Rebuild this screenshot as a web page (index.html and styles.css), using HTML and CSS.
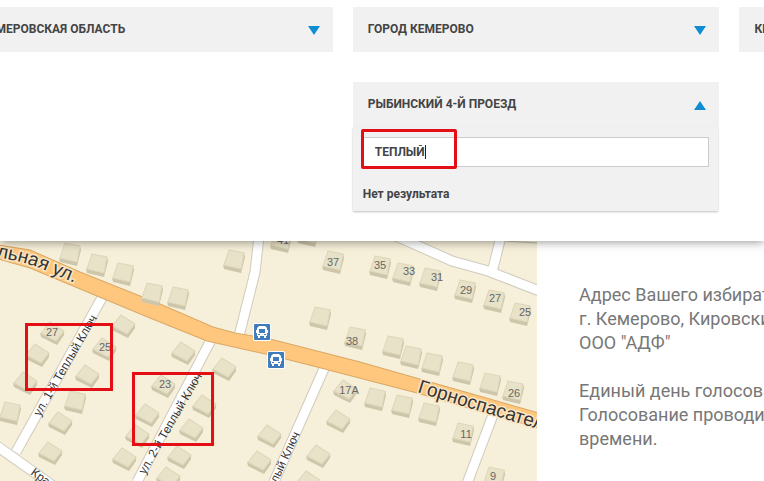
FILE: index.html
```html
<!DOCTYPE html>
<html lang="ru">
<head>
    <meta charset="UTF-8">
    <meta name="viewport" content="width=device-width, initial-scale=1.0">
    <title>Поиск избирательного участка</title>
    <link rel="stylesheet" href="styles.css">
</head>
<body>
    <form class="filters">
        <div class="dropdown">
            <select class="field" aria-label="Регион">
                <option>КЕМЕРОВСКАЯ ОБЛАСТЬ</option>
            </select>
        </div>
        <div class="dropdown">
            <select class="field" aria-label="Город">
                <option>ГОРОД КЕМЕРОВО</option>
            </select>
        </div>
        <div class="dropdown">
            <select class="field" aria-label="Район">
                <option>КИРОВСКИЙ РАЙОН</option>
            </select>
        </div>
        <div class="dropdown street open">
            <button class="field" type="button" aria-expanded="true" aria-controls="streetList">РЫБИНСКИЙ 4-Й ПРОЕЗД</button>
            <div class="panel" id="streetList">
                <div class="search">
                    <input class="searchInput" type="text" value="ТЕПЛЫЙ" aria-label="Поиск улицы">
                    <span class="caret"></span>
                    <span class="mark"></span>
                </div>
                <div class="empty">Нет результата</div>
            </div>
        </div>
    </form>

    <main class="content">
        <svg class="map" viewBox="0 241 537 240" preserveAspectRatio="xMinYMin slice" role="img" aria-label="Карта">
            <defs>
                <g id="h">
                    <path fill="#cdc6aa" d="M-11 4 7 8 10 -8 11 -4 7 12 -10 8z"/>
                    <path fill="#e8e2c8" stroke="#ddd6ba" d="M-5 -11 10 -8 7 8 -10 4z"/>
                </g>
                <g id="d">
                    <path fill="#cdc6aa" d="M-12 0 4 8 12 -2 12 2 5 12 -11 4z"/>
                    <path fill="#e8e2c8" stroke="#ddd6ba" d="M-2 -11 12 -2 4 8 -11 0z"/>
                </g>
                <g id="bus">
                    <rect width="18" height="18" rx="2" fill="#fff"/>
                    <rect x="1" y="1" width="16" height="16" rx="1" fill="#407cbb"/>
                    <path fill="#fff" fill-rule="evenodd" d="M6 3h6l2 2v2h1v3h-1v3h-1v2h-2v-2h-4v2h-2v-2h-1v-3h-1v-3h1v-2zM6 6v4h6v-4zM5 11v1h2v-1zM11 11v1h2v-1z"/>
                </g>
                <path id="mainLeft" d="M-4 257Q26 262 44 270T100 293"/>
            </defs>

            <rect y="241" width="537" height="240" fill="#f6efd9"/>
            <path d="M505 241 537 243" stroke="#c4bfb0"/>

            <!-- дворовые дороги -->
            <g class="roadEdge">
                <path d="M104 294 16 452"/>
                <path d="M-10 441 66 495"/>
                <path d="M213 336 137 482"/>
                <path d="M259 236 255 272 239 336"/>
                <path d="M326 364 273 484"/>
                <path d="M396 236 452 261 488 271 542 292"/>
                <path d="M501 236 492 272"/>
                <path d="M494 412 466 486"/>
            </g>
            <g class="road">
                <path d="M104 294 16 452"/>
                <path d="M-10 441 66 495"/>
                <path d="M213 336 137 482"/>
                <path d="M259 236 255 272 239 336"/>
                <path d="M326 364 273 484"/>
                <path d="M396 236 452 261 488 271 542 292"/>
                <path d="M501 236 492 272"/>
                <path d="M494 412 466 486"/>
            </g>
            <path class="mainRoad" d="M-2 245 30 250 80 272 160 304 213 327 235 333 270 339 360 362 423 380 539 413V428L493 415 417 393 317 367 270 355 207 341 150 318 97 296 30 268 -2 259z"/>

            <!-- дома -->
            <g>
                <use href="#h" x="70" y="254"/><use href="#h" x="97" y="265"/><use href="#h" x="123" y="274"/>
                <use href="#h" x="152" y="294"/><use href="#h" x="178" y="298"/><use href="#h" x="234" y="261"/>
                <use href="#h" x="281" y="241"/><use href="#h" x="308" y="235"/><use href="#h" x="333" y="262"/>
                <use href="#h" x="320" y="318"/><use href="#h" x="355" y="338"/><use href="#h" x="380" y="267"/>
                <use href="#h" x="403" y="274"/><use href="#h" x="430" y="279"/><use href="#h" x="465" y="291"/>
                <use href="#h" x="494" y="301"/><use href="#h" x="520" y="314"/><use href="#h" x="393" y="347"/>
                <use href="#h" x="411" y="357"/><use href="#h" x="432" y="364"/><use href="#h" x="463" y="373"/>
                <use href="#h" x="490" y="384"/><use href="#h" x="513" y="392"/><use href="#h" x="375" y="399"/>
                <use href="#h" x="402" y="406"/><use href="#h" x="429" y="414"/><use href="#h" x="463" y="434"/>
                <use href="#h" x="494" y="478"/><use href="#h" x="75" y="402"/><use href="#h" x="10" y="413"/>
                <use href="#d" x="123" y="326"/><use href="#d" x="52" y="333"/><use href="#d" x="104" y="349"/>
                <use href="#d" x="183" y="353"/><use href="#d" x="37" y="355"/><use href="#d" x="25" y="383"/>
                <use href="#d" x="87" y="376"/><use href="#d" x="60" y="423"/><use href="#d" x="50" y="453"/>
                <use href="#d" x="163" y="386"/><use href="#d" x="147" y="415"/><use href="#d" x="137" y="436"/>
                <use href="#d" x="124" y="459"/><use href="#d" x="179" y="457"/><use href="#d" x="168" y="478"/>
                <use href="#d" x="191" y="430"/><use href="#d" x="224" y="369"/><use href="#d" x="204" y="406"/>
                <use href="#d" x="269" y="436"/><use href="#d" x="259" y="462"/><use href="#d" x="345" y="391"/>
                <use href="#d" x="338" y="421"/><use href="#d" x="318" y="456"/><use href="#d" x="308" y="482"/>
            </g>

            <g class="number">
                <text x="52" y="336">27</text>
                <text x="105" y="351">25</text>
                <text x="165" y="388">23</text>
                <text x="283" y="244">41</text>
                <text x="333" y="266">37</text>
                <text x="380" y="269">35</text>
                <text x="409" y="275">33</text>
                <text x="437" y="281">31</text>
                <text x="466" y="294">29</text>
                <text x="495" y="302">27</text>
                <text x="525" y="316">25</text>
                <text x="352" y="345">38</text>
                <text x="349" y="394">17А</text>
                <text x="514" y="397">26</text>
                <text x="466" y="438">11</text>
                <text x="493" y="480">9</text>
            </g>

            <g class="streetName">
                <text transform="translate(40 417) rotate(-60)">ул. 1-й Теплый Ключ</text>
                <text transform="translate(145 475) rotate(-60)">ул. 2-й Теплый Ключ</text>
                <text transform="translate(300 434) rotate(-65)" text-anchor="end">ул. 3-й Теплый Ключ</text>
                <text transform="translate(30 474) rotate(36)">Красная ул.</text>
            </g>
            <g class="mainName">
                <text><textPath href="#mainLeft">льная ул.</textPath></text>
                <text transform="translate(417 392) rotate(17)">Горноспасательная ул.</text>
            </g>

            <use href="#bus" x="253" y="323"/>
            <use href="#bus" x="267" y="351"/>

            <path class="frame" d="M25 323h88v68h-88zM28 326v62h82v-62z"/>
            <path class="frame" d="M132 372h82v74h-82zM135 375v68h76v-68z"/>
        </svg>

        <div class="info">
            <p>Адрес Вашего избирательного участка:<br>
            г. Кемерово, Кировский район<br>
            ООО "АДФ"</p>
            <p>Единый день голосования<br>
            Голосование проводится по местному<br>
            времени.</p>
        </div>
    </main>
</body>
</html>
```
FILE: styles.css
```css
* {
    box-sizing: border-box;
}
body {
    margin: 0;
    min-height: 100vh;
    display: flex;
    flex-direction: column;
    overflow: hidden;
    background-color: #fff;
    font-family: Roboto, "Liberation Sans", sans-serif;
}

/* фильтры */
.filters {
    display: grid;
    grid-template-columns: calc(48% - 34px) 48% 48%;
    gap: 30px 20px;
    padding: 7px 0 30px;
    position: relative;
    z-index: 1;
    background-color: #fff;
    box-shadow: 0 0 10px rgba(0, 0, 0, 0.5);
}
.dropdown {
    position: relative;
    display: flex;
    flex-direction: column;
}
.dropdown:first-child {
    margin-left: -34px;
}
.street {
    grid-column: 2;
}
.field {
    appearance: none;
    width: 100%;
    height: 45px;
    margin: 0;
    padding: 0 15px 1px;
    border: 0;
    border-radius: 0;
    background-color: #f1f1f1;
    color: #444;
    font: bold 12px Roboto, "Liberation Sans", sans-serif;
    text-align: left;
}
.dropdown::after {
    content: "";
    position: absolute;
    right: 13px;
    top: 19px;
    border: 6px solid transparent;
    border-top: 9px solid #0f8dd3;
    border-bottom: 0;
    pointer-events: none;
}
.open::after {
    border-top: 0;
    border-bottom: 9px solid #0f8dd3;
}
.panel {
    margin-right: 1px;
    padding: 10px 9px 8px 10px;
    background-color: #f1f1f1;
    box-shadow: 0 1px 2px rgba(0, 0, 0, 0.25);
    color: #444;
    font-weight: bold;
    font-size: 12px;
}
.search {
    position: relative;
}
.searchInput {
    display: block;
    width: 100%;
    height: 30px;
    padding: 0 11px;
    border: 1px solid #ccc;
    border-radius: 0;
    background-color: #fff;
    color: #444;
    font: bold 12px Roboto, "Liberation Sans", sans-serif;
}
.caret {
    position: absolute;
    left: 62px;
    top: 8px;
    width: 1px;
    height: 14px;
    background-color: #222;
}
.mark {
    position: absolute;
    left: -2px;
    top: -8px;
    width: 96px;
    height: 40px;
    border: 3px solid #e30f14;
    border-radius: 2px;
}
.empty {
    padding-top: 18px;
    line-height: 18px;
}

/* карта и адрес */
.content {
    flex: 1;
    display: flex;
}
.map {
    flex: none;
    display: block;
    width: 70.3%;
    height: 240px;
}
.roadEdge path {
    fill: none;
    stroke: #cfcbbe;
    stroke-width: 11px;
}
.road path {
    fill: none;
    stroke: #fff;
    stroke-width: 9px;
}
.mainRoad {
    fill: #ffc77d;
    stroke: #dba864;
}
.number {
    font: 11px "Liberation Sans", sans-serif;
    fill: #666;
    text-anchor: middle;
}
.streetName {
    font: 12px "Liberation Sans", sans-serif;
    fill: #333;
}
.mainName {
    font: 19px "Liberation Sans", sans-serif;
    fill: #333;
    stroke: #fbe6c4;
    stroke-width: 3px;
    paint-order: stroke;
}
.frame {
    fill: #e30f14;
    fill-rule: evenodd;
}
.info {
    flex: 1;
    min-width: 0;
    padding: 42px 0 0 42px;
    overflow: hidden;
    white-space: nowrap;
    color: #777;
    font-size: 18px;
    line-height: 24px;
}
.info p {
    margin: 0 0 24px;
}
```
